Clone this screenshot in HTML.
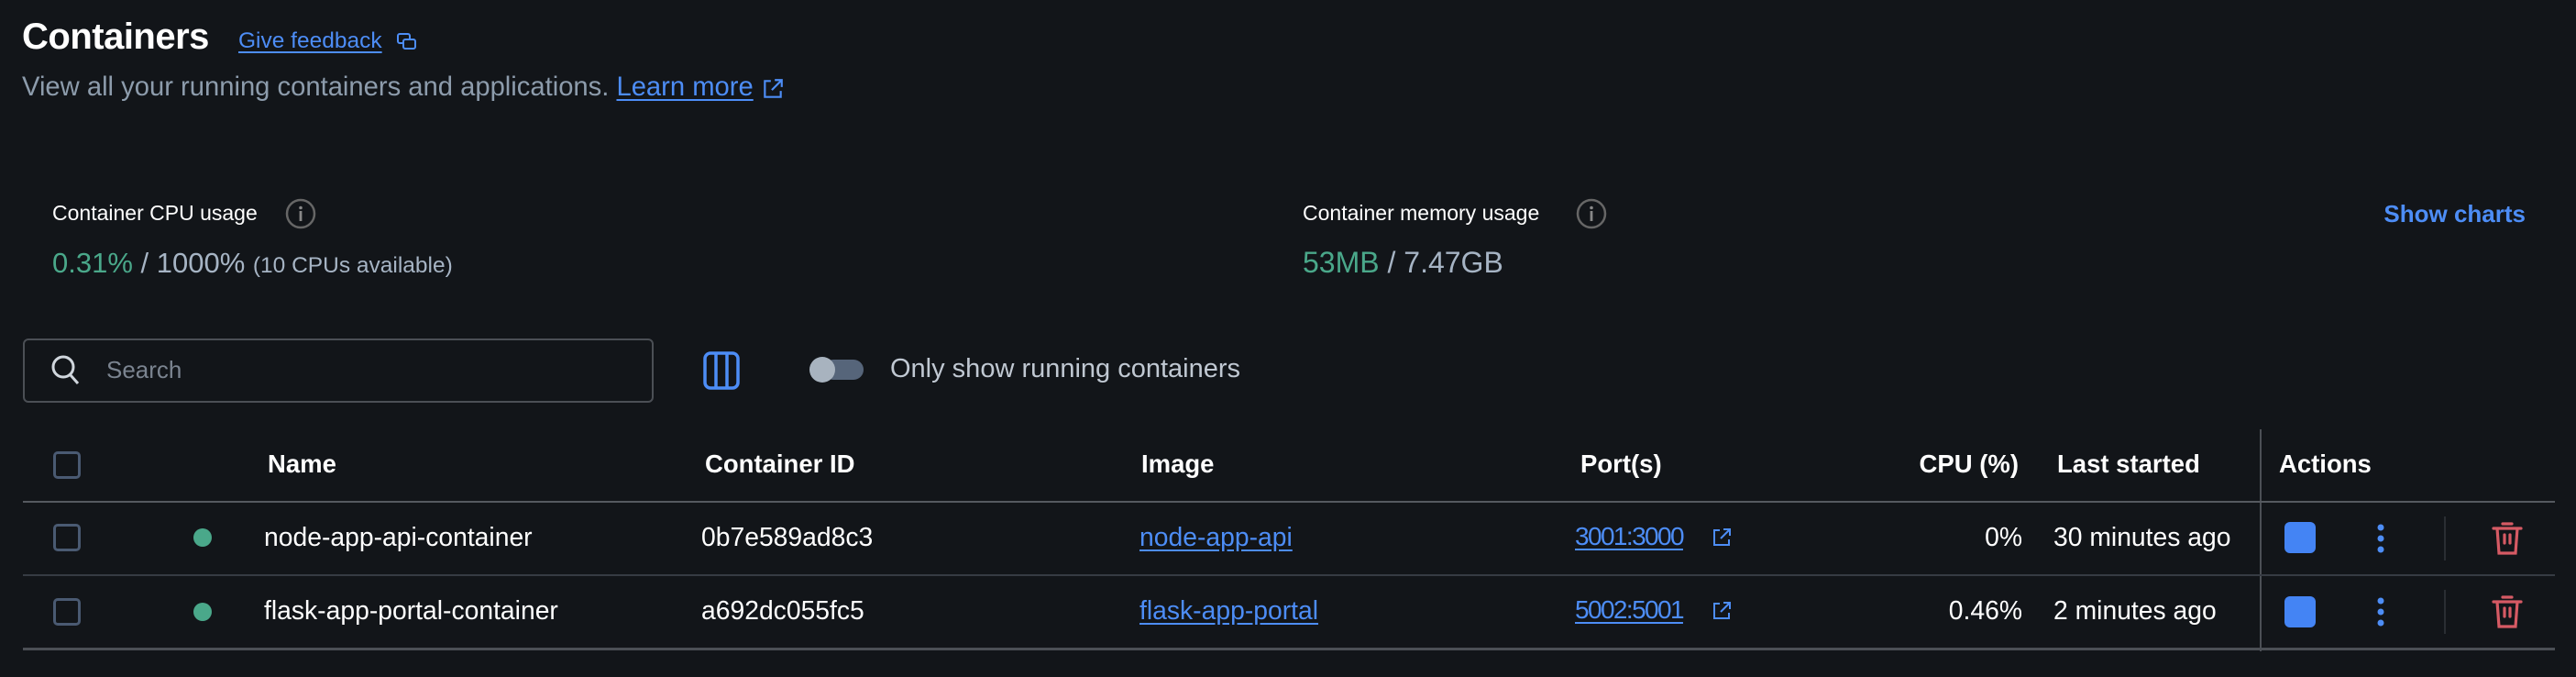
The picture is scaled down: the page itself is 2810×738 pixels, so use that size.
<!DOCTYPE html>
<html><head><meta charset="utf-8"><style>
*{margin:0;padding:0;box-sizing:border-box}
body{width:2810px;height:738px;background:#121519;font-family:"Liberation Sans",sans-serif;color:#fff;position:relative;overflow:hidden}
.a{position:absolute;white-space:nowrap}
.lnk{color:#4d8df6;text-decoration:underline;text-underline-offset:4px}
.g{color:#8d9cac}
.hd{font-weight:bold;font-size:27.5px;top:490px}
.r{font-size:28.3px}
.p{font-size:28px;letter-spacing:-1.6px}
.cb{position:absolute;width:30px;height:30px;border:3px solid #4a5a72;border-radius:5px;left:58px}
.dot{position:absolute;width:20px;height:20px;border-radius:50%;background:#4aa88a;left:211px}
.sq{position:absolute;width:34px;height:34px;border-radius:6px;background:#4484f4;left:2492px}
.line{position:absolute;left:25px;width:2762px}
</style></head><body>
<div class="a" style="left:24px;top:18px;font-size:40px;font-weight:bold;letter-spacing:-0.5px">Containers</div>
<div class="a lnk" style="left:260px;top:31px;font-size:24.5px">Give feedback</div>
<svg class="a" style="left:432px;top:34px" width="24" height="24" viewBox="0 0 24 24" fill="none" stroke="#4d8df6" stroke-width="2"><rect x="2" y="3" width="13" height="10" rx="2"/><rect x="8" y="9" width="13" height="10" rx="2" fill="#121519"/></svg>
<div class="a g" style="left:24px;top:79px;font-size:29.2px">View all your running containers and applications. <span class="lnk">Learn more</span></div>
<svg class="a" style="left:830px;top:84px" width="26" height="26" viewBox="0 0 24 24" fill="none" stroke="#4d8df6" stroke-width="2"><path d="M10 4H4v16h16v-6M14 3h7v7M21 3l-10 10"/></svg>

<div class="a" style="left:57px;top:219px;font-size:23px">Container CPU usage</div>
<svg class="a" style="left:310px;top:215px" width="36" height="36" viewBox="0 0 36 36"><circle cx="18" cy="18" r="15" fill="none" stroke="#666" stroke-width="2.5"/><circle cx="18" cy="11.5" r="1.8" fill="#888"/><rect x="16.6" y="15" width="2.8" height="11" fill="#888"/></svg>
<div class="a" style="left:57px;top:269px;font-size:31px"><span style="color:#4aa88a">0.31%</span><span style="color:#a6b4c4"> / 1000% </span><span style="color:#a6b4c4;font-size:24.5px">(10 CPUs available)</span></div>

<div class="a" style="left:1421px;top:219px;font-size:23px">Container memory usage</div>
<svg class="a" style="left:1718px;top:215px" width="36" height="36" viewBox="0 0 36 36"><circle cx="18" cy="18" r="15" fill="none" stroke="#666" stroke-width="2.5"/><circle cx="18" cy="11.5" r="1.8" fill="#888"/><rect x="16.6" y="15" width="2.8" height="11" fill="#888"/></svg>
<div class="a" style="left:1421px;top:268px;font-size:32px"><span style="color:#4aa88a">53MB</span><span style="color:#a6b4c4"> / 7.47GB</span></div>
<div class="a" style="right:55px;top:218px;font-size:26px;color:#4d8df6;font-weight:bold">Show charts</div>

<div class="a" style="left:25px;top:369px;width:688px;height:70px;border:2px solid #4b4f55;border-radius:6px"></div>
<svg class="a" style="left:54px;top:385px" width="36" height="38" viewBox="0 0 36 38" fill="none" stroke="#d0d6dd" stroke-width="3"><circle cx="15" cy="15" r="11"/><path d="M23 24l8 9"/></svg>
<div class="a" style="left:116px;top:388px;font-size:26px;color:#7b8490">Search</div>
<svg class="a" style="left:767px;top:383px" width="40" height="42" viewBox="0 0 40 42" fill="none" stroke="#4d8df6" stroke-width="3.5"><rect x="2" y="2" width="36" height="38" rx="6"/><path d="M14 2v38M26 2v38"/></svg>
<div class="a" style="left:898px;top:392px;width:44px;height:22px;border-radius:11px;background:#56657a"></div>
<div class="a" style="left:883px;top:389px;width:28px;height:28px;border-radius:50%;background:#a8b3bf"></div>
<div class="a" style="left:971px;top:386px;font-size:29px;color:#c0c8d2">Only show running containers</div>

<div class="cb" style="top:492px"></div>
<div class="a hd" style="left:292px">Name</div>
<div class="a hd" style="left:769px">Container ID</div>
<div class="a hd" style="left:1245px">Image</div>
<div class="a hd" style="left:1724px">Port(s)</div>
<div class="a hd" style="left:2082px;width:120px;text-align:right">CPU (%)</div>
<div class="a hd" style="left:2244px">Last started</div>
<div class="a hd" style="left:2486px">Actions</div>
<div class="a" style="left:2465px;top:468px;width:2px;height:242px;background:#4b4f55"></div>
<div class="line" style="top:546px;height:2px;background:#55595f"></div>

<div class="cb" style="top:571px"></div>
<div class="dot" style="top:576px"></div>
<div class="a r" style="left:288px;top:569px">node-app-api-container</div>
<div class="a r" style="left:765px;top:569px">0b7e589ad8c3</div>
<div class="a r lnk" style="left:1243px;top:569px">node-app-api</div>
<div class="a p lnk" style="left:1718px;top:569px">3001:3000</div>
<svg class="a" style="left:1866px;top:574px" width="24" height="24" viewBox="0 0 24 24" fill="none" stroke="#4d8df6" stroke-width="2"><path d="M10 4H4v16h16v-6M14 3h7v7M21 3l-10 10"/></svg>
<div class="a r" style="left:2082px;top:569px;width:124px;text-align:right">0%</div>
<div class="a r" style="left:2240px;top:569px">30 minutes ago</div>
<div class="sq" style="top:569px"></div>
<svg class="a" style="left:2589px;top:570px" width="16" height="34" viewBox="0 0 16 34" fill="#4d8df6"><circle cx="8" cy="5" r="3.5"/><circle cx="8" cy="17" r="3.5"/><circle cx="8" cy="29" r="3.5"/></svg>
<div class="a" style="left:2666px;top:563px;width:2px;height:48px;background:#2a2e33"></div>
<svg class="a" style="left:2718px;top:569px" width="34" height="36" viewBox="0 0 34 36" fill="none" stroke="#d65a64" stroke-width="3.2" stroke-linecap="round"><path d="M2 7h30M12 2h10M6 7l2 27h18l2-27M14 14v9M20 14v9"/></svg>
<div class="line" style="top:626px;height:2px;background:#363b43"></div>

<div class="cb" style="top:652px"></div>
<div class="dot" style="top:657px"></div>
<div class="a r" style="left:288px;top:649px">flask-app-portal-container</div>
<div class="a r" style="left:765px;top:649px">a692dc055fc5</div>
<div class="a r lnk" style="left:1243px;top:649px">flask-app-portal</div>
<div class="a p lnk" style="left:1718px;top:649px">5002:5001</div>
<svg class="a" style="left:1866px;top:654px" width="24" height="24" viewBox="0 0 24 24" fill="none" stroke="#4d8df6" stroke-width="2"><path d="M10 4H4v16h16v-6M14 3h7v7M21 3l-10 10"/></svg>
<div class="a r" style="left:2082px;top:649px;width:124px;text-align:right">0.46%</div>
<div class="a r" style="left:2240px;top:649px">2 minutes ago</div>
<div class="sq" style="top:650px"></div>
<svg class="a" style="left:2589px;top:650px" width="16" height="34" viewBox="0 0 16 34" fill="#4d8df6"><circle cx="8" cy="5" r="3.5"/><circle cx="8" cy="17" r="3.5"/><circle cx="8" cy="29" r="3.5"/></svg>
<div class="a" style="left:2666px;top:643px;width:2px;height:48px;background:#2a2e33"></div>
<svg class="a" style="left:2718px;top:649px" width="34" height="36" viewBox="0 0 34 36" fill="none" stroke="#d65a64" stroke-width="3.2" stroke-linecap="round"><path d="M2 7h30M12 2h10M6 7l2 27h18l2-27M14 14v9M20 14v9"/></svg>
<div class="line" style="top:706px;height:3px;background:#4b4f55"></div>
</body></html>
